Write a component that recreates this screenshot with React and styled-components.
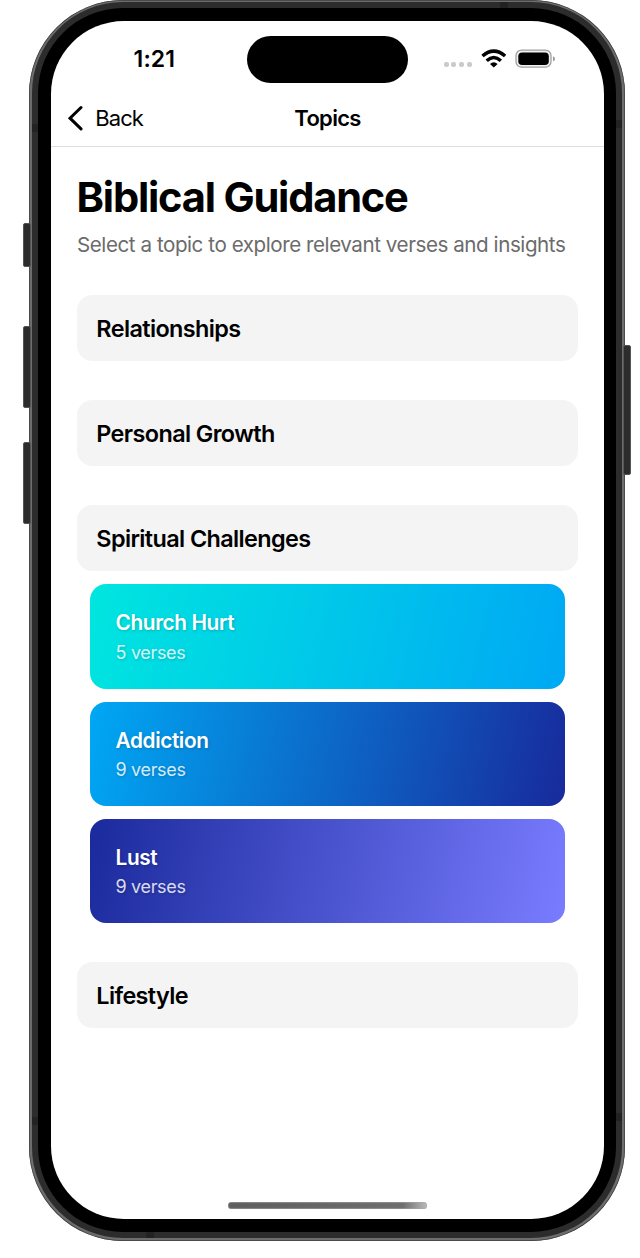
import React from "react";
import styled, { createGlobalStyle } from "styled-components";

const GlobalStyle = createGlobalStyle`
  * { box-sizing: border-box; }
  body {
    margin: 0;
    background: #fff;
    color: #000;
    font-family: Inter, "Liberation Sans", sans-serif;
    overflow: hidden;
  }
`;

const Stage = styled.main`
  width: 640px;
  height: 1258px;
  padding-left: 29px;
`;

const Device = styled.div`
  position: relative;
  width: 596px;
  height: 1241px;
  padding: 2px 3px 3px;
  border-radius: 94px;
  background: #6c6d6d;
  box-shadow: inset 0 0 0 0.7px #3e3e3e;
`;

const Band = styled.div`
  height: 100%;
  padding: 6px;
  border-radius: 91px;
  background: #2c2c2c;
`;

const Bezel = styled.div`
  height: 100%;
  padding: 13px 12px 13px 13px;
  border-radius: 85px;
  background: #000;
`;

const Screen = styled.div`
  display: flex;
  flex-direction: column;
  height: 100%;
  border-radius: 73px;
  background: #fff;
  overflow: hidden;
`;

const SideButton = styled.span`
  position: absolute;
  top: ${(p) => p.$top}px;
  ${(p) => (p.$right ? "right: -6px;" : "left: -6px;")}
  width: 8px;
  height: ${(p) => p.$length}px;
  border: 1px solid #555;
  border-radius: 2px;
  background: #2c2c2c;
`;

const Antenna = styled.span`
  position: absolute;
  top: ${(p) => p.$top}px;
  left: ${(p) => p.$left}px;
  width: ${(p) => (p.$across ? 8 : 6)}px;
  height: ${(p) => (p.$across ? 6 : 8)}px;
  background: #222;
`;

const StatusBar = styled.div`
  display: grid;
  grid-template-columns: 196px 161px 1fr;
  flex: none;
  height: 69px;
  padding-top: 14.5px;
`;

const Clock = styled.time`
  padding-left: 82.5px;
  font-size: 23px;
  font-weight: 600;
  line-height: 46px;
  letter-spacing: 0.15px;
`;

const Island = styled.div`
  height: 47px;
  border-radius: 24px;
  background: #000;
`;

const Indicators = styled.div`
  display: flex;
  align-items: flex-start;
  padding: 12px 0 0 35.5px;
`;

const Cellular = styled.div`
  display: flex;
  gap: 2.7px;
  padding-top: 14.5px;
  i {
    width: 5px;
    height: 5px;
    border-radius: 2px;
    background: #cacaca;
  }
`;

const Wifi = styled.svg`
  width: 26px;
  height: 20px;
  margin: 1px 0 0 9px;
`;

const Battery = styled.svg`
  width: 41px;
  height: 20px;
  margin: 1px 0 0 8.7px;
`;

const NavBar = styled.header`
  display: grid;
  grid-template-columns: 1fr auto 1fr;
  align-items: center;
  flex: none;
  height: 57px;
  border-bottom: 1px solid #dfdfdf;
  padding-left: 16px;
  padding-right: 16px;
`;

const BackButton = styled.button`
  display: flex;
  align-items: center;
  gap: 11.2px;
  border: 0;
  padding: 0;
  background: none;
  color: #000;
  font: 400 22px/30px Inter, sans-serif;
  letter-spacing: -0.9px;
  svg { width: 17px; height: 26px; }
`;

const NavTitle = styled.h2`
  margin: 0;
  font-size: 22px;
  font-weight: 600;
  line-height: 30px;
  letter-spacing: -0.7px;
`;

const Content = styled.section`
  flex: 1;
  padding: 26px 26px 0;
`;

const Title = styled.h1`
  margin: 0;
  font-size: 41.6px;
  font-weight: 700;
  line-height: 48px;
  letter-spacing: -1.2px;
  text-indent: -0.5px;
  white-space: nowrap;
`;

const Subtitle = styled.p`
  margin: 11px 0 37.2px;
  color: #6b6b6b;
  font-size: 20.6px;
  line-height: 26px;
  letter-spacing: -0.44px;
  white-space: nowrap;
`;

const Groups = styled.div`
  display: flex;
  flex-direction: column;
  gap: 39px;
`;

const GroupHeader = styled.h3`
  margin: 0;
  height: 66px;
  padding-left: 19.3px;
  border-radius: 15.6px;
  background: #f4f4f4;
  font-size: 23.4px;
  font-weight: 600;
  line-height: 67px;
  letter-spacing: -0.6px;
`;

const TopicList = styled.div`
  display: flex;
  flex-direction: column;
  gap: 13.1px;
  padding: 13.1px 13px 0;
`;

const TopicCard = styled.article`
  height: 104.3px;
  padding: 24.9px 26px 0 25.6px;
  border-radius: 16px;
  background: linear-gradient(102.4deg, ${(p) => p.$from}, ${(p) => p.$to});
  color: #fff;
  text-shadow: 1px 1px 3px rgba(0, 0, 0, 0.2);
`;

const TopicName = styled.h4`
  margin: 0;
  font-size: 20.8px;
  font-weight: 600;
  line-height: 28px;
  letter-spacing: -0.4px;
`;

const VerseCount = styled.p`
  margin: 3.5px 0 0;
  font-size: 18px;
  line-height: 24px;
  letter-spacing: -0.35px;
  opacity: 0.82;
`;

const HomeIndicator = styled.div`
  align-self: center;
  flex: none;
  width: 199px;
  height: 7px;
  margin-bottom: 10px;
  border-radius: 4px;
  background: linear-gradient(90deg, #5e5e5e, #6e6e6e 88%, #bbb);
  box-shadow: inset 0 0 1px 0.5px #aaa;
`;

const groups = [
  { name: "Relationships" },
  { name: "Personal Growth" },
  {
    name: "Spiritual Challenges",
    topics: [
      { name: "Church Hurt", verses: 5, from: "#00e6df", to: "#00a8f4" },
      { name: "Addiction", verses: 9, from: "#00a8f4", to: "#182a9c" },
      { name: "Lust", verses: 9, from: "#1a2a9c", to: "#797cff" },
    ],
  },
  { name: "Lifestyle" },
];

export default function App() {
  return (
    <Stage>
      <GlobalStyle />
      <Device>
        <SideButton $top={223} $length={44} />
        <SideButton $top={326} $length={82} />
        <SideButton $top={442} $length={82} />
        <SideButton $top={345} $length={130} $right />
        <Band>
          <Bezel>
            <Screen>
              <StatusBar>
                <Clock>1:21</Clock>
                <Island />
                <Indicators>
                  <Cellular><i /><i /><i /><i /></Cellular>
                  <Wifi viewBox="0 0 26 20">
                    <path d="M1.5 7Q12.8-2.8 24.1 7M5.7 11.7Q12.8 5.3 19.9 11.7" fill="none" stroke="#000" strokeWidth="3.5" />
                    <path d="M9 14.9Q12.8 11.6 16.6 14.9L12.8 18.6Z" />
                  </Wifi>
                  <Battery viewBox="0 0 41 20">
                    <rect x="1" y="1.2" width="35" height="17" rx="5.5" fill="#f1f1f1" stroke="#a0a0a0" strokeWidth="1.3" />
                    <rect x="3.3" y="3.4" width="30.5" height="12.6" rx="3.8" />
                    <path d="M38 7.2Q40 7.7 40 9.7T38 12.2Z" fill="#999" />
                  </Battery>
                </Indicators>
              </StatusBar>
              <NavBar>
                <BackButton>
                  <svg viewBox="0 0 17 26">
                    <path d="M14 2.5 3 13.2 14 23.9" fill="none" stroke="#000" strokeWidth="3" strokeLinecap="round" strokeLinejoin="miter" />
                  </svg>
                  Back
                </BackButton>
                <NavTitle>Topics</NavTitle>
              </NavBar>
              <Content>
                <Title>Biblical Guidance</Title>
                <Subtitle>Select a topic to explore relevant verses and insights</Subtitle>
                <Groups>
                  {groups.map((group) => (
                    <div key={group.name}>
                      <GroupHeader>{group.name}</GroupHeader>
                      {group.topics && (
                        <TopicList>
                          {group.topics.map((topic) => (
                            <TopicCard key={topic.name} $from={topic.from} $to={topic.to}>
                              <TopicName>{topic.name}</TopicName>
                              <VerseCount>{topic.verses} verses</VerseCount>
                            </TopicCard>
                          ))}
                        </TopicList>
                      )}
                    </div>
                  ))}
                </Groups>
              </Content>
              <HomeIndicator />
            </Screen>
          </Bezel>
        </Band>
        <Antenna $top={124} $left={3} />
        <Antenna $top={120} $left={587} />
        <Antenna $top={1117} $left={3} />
        <Antenna $top={1113} $left={587} />
        <Antenna $top={2} $left={471} $across />
        <Antenna $top={1232} $left={117} $across />
      </Device>
    </Stage>
  );
}
